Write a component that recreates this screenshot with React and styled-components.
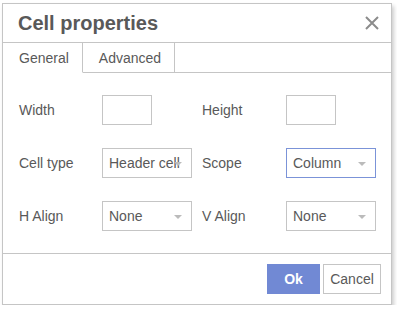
import React from "react";
import styled, { createGlobalStyle } from "styled-components";

const GlobalStyle = createGlobalStyle`
  body {
    margin: 0;
    background: #ffffff;
    font-family: "Liberation Sans", Arial, sans-serif;
  }
`;

const Dialog = styled.div`
  box-sizing: border-box;
  width: 390px;
  margin: 3px 0 0 2px;
  background: #fff;
  border: 1px solid #c5c5c5;
  box-shadow: 2px 3px 4px rgba(0, 0, 0, 0.2);
  color: #595959;
  font-size: 14px;
`;

const Header = styled.div`
  height: 38px;
  display: flex;
  align-items: center;
  justify-content: space-between;
  padding: 0 12px 0 15px;
  border-bottom: 1px solid #c5c5c5;
`;

const Title = styled.div`
  font-size: 20px;
  font-weight: bold;
  color: #595959;
`;

const Close = styled.svg`
  width: 14px;
  height: 14px;
  stroke: #8c8c8c;
  stroke-width: 2;
  fill: none;
`;

const TabRow = styled.div`
  display: flex;
  height: 30px;
`;

const Tab = styled.div`
  box-sizing: border-box;
  display: flex;
  align-items: center;
  padding: 0 13px 0 16px;
  border-right: 1px solid #c5c5c5;
  border-bottom: 1px solid ${(p) => (p.active ? "transparent" : "#c5c5c5")};
`;

const TabFill = styled.div`
  flex: 1;
  border-bottom: 1px solid #c5c5c5;
`;

const Form = styled.div`
  display: grid;
  grid-template-columns: 83px 100px 84px 90px;
  row-gap: 23px;
  align-items: center;
  padding: 22px 0 22px 16px;
  border-bottom: 1px solid #c5c5c5;
`;

const Label = styled.div`
  line-height: 30px;
`;

const TextBox = styled.div`
  box-sizing: border-box;
  width: 50px;
  height: 30px;
  border: 1px solid #c5c5c5;
`;

const SelectBox = styled.div`
  position: relative;
  box-sizing: border-box;
  width: 90px;
  height: 30px;
  display: flex;
  align-items: center;
  padding-left: 6px;
  border: 1px solid ${(p) => (p.focused ? "#7b93d8" : "#c5c5c5")};
  white-space: nowrap;
  overflow: hidden;
`;

const Arrow = styled.span`
  position: absolute;
  right: 9px;
  top: 13px;
  width: 0;
  height: 0;
  border-left: 4px solid transparent;
  border-right: 4px solid transparent;
  border-top: 4px solid #bbbbbb;
`;

const Footer = styled.div`
  display: flex;
  justify-content: flex-end;
  gap: 3px;
  padding: 10px 10px 10px 0;
`;

const Button = styled.button`
  box-sizing: border-box;
  height: 30px;
  width: ${(p) => (p.primary ? "53px" : "58px")};
  padding: 0;
  font-family: inherit;
  font-size: 14px;
  font-weight: ${(p) => (p.primary ? "bold" : "normal")};
  color: ${(p) => (p.primary ? "#fff" : "#595959")};
  background: ${(p) => (p.primary ? "#7189d4" : "#fff")};
  border: 1px solid ${(p) => (p.primary ? "#7189d4" : "#c5c5c5")};
`;

function Select({ value, focused }) {
  return (
    <SelectBox focused={focused}>
      {value}
      <Arrow />
    </SelectBox>
  );
}

export default function App() {
  return (
    <>
      <GlobalStyle />
      <Dialog>
        <Header>
          <Title>Cell properties</Title>
          <Close viewBox="0 0 14 14">
            <path d="M1 1 L13 13 M13 1 L1 13" />
          </Close>
        </Header>
        <TabRow>
          <Tab active>General</Tab>
          <Tab>Advanced</Tab>
          <TabFill />
        </TabRow>
        <Form>
          <Label>Width</Label>
          <TextBox />
          <Label>Height</Label>
          <TextBox />

          <Label>Cell type</Label>
          <Select value="Header cell" />
          <Label>Scope</Label>
          <Select value="Column" focused />

          <Label>H Align</Label>
          <Select value="None" />
          <Label>V Align</Label>
          <Select value="None" />
        </Form>
        <Footer>
          <Button primary>Ok</Button>
          <Button>Cancel</Button>
        </Footer>
      </Dialog>
    </>
  );
}
